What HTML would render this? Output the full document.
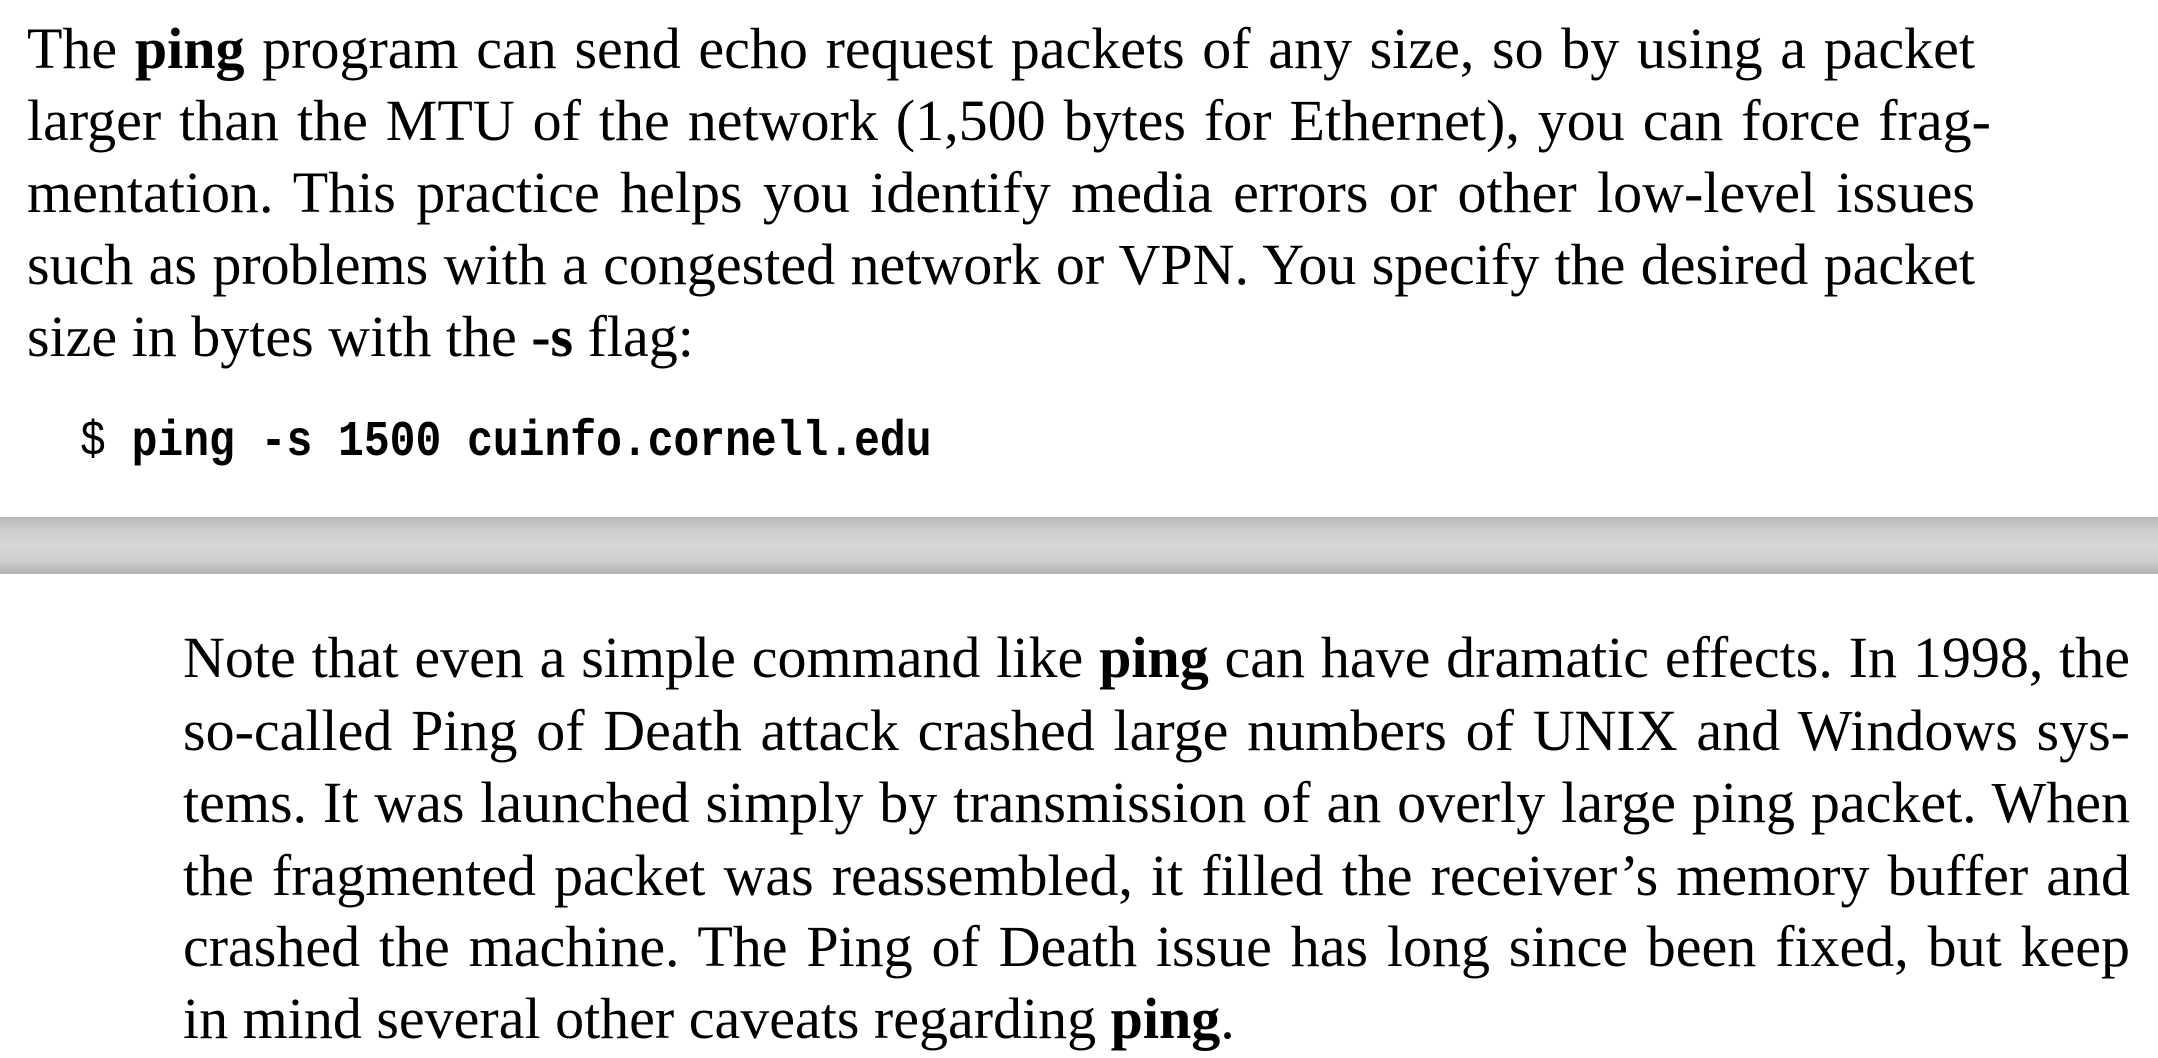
<!DOCTYPE html>
<html><head><meta charset="utf-8"><style>
html,body{margin:0;padding:0;background:#fff;width:2158px;height:1058px;overflow:hidden;position:relative}
.l{position:absolute;font-family:"Liberation Serif",serif;font-size:58px;line-height:72px;height:72px;color:#000;text-align:justify;text-align-last:justify;white-space:normal;}
.l.n{text-align-last:left;white-space:nowrap}
.code{position:absolute;left:80px;top:415px;font-family:"Liberation Mono",monospace;font-size:50px;line-height:56px;color:#000;white-space:pre;transform:scaleX(0.86);transform-origin:0 0}
.bar{position:absolute;left:0;top:517px;width:2158px;height:57px;background:linear-gradient(#b8b8b8 0%,#cfcfcf 25%,#d6d6d6 50%,#cfcfcf 75%,#b4b4b4 100%)}
</style></head><body>
<div class="l" style="left:27px;top:13px;width:1948px">The <b>ping</b> program can send echo request packets of any size, so by using a packet</div>
<div class="l" style="left:27px;top:85px;width:1964px">larger than the MTU of the network (1,500 bytes for Ethernet), you can force frag-</div>
<div class="l" style="left:27px;top:157px;width:1948px">mentation. This practice helps you identify media errors or other low-level issues</div>
<div class="l" style="left:27px;top:229px;width:1948px">such as problems with a congested network or VPN. You specify the desired packet</div>
<div class="l n" style="left:27px;top:301px;width:1948px">size in bytes with the <b>-s</b> flag:</div>
<div class="code">$ <b>ping -s 1500 cuinfo.cornell.edu</b></div>
<div class="bar"></div>
<div class="l" style="left:183px;top:622px;width:1947px">Note that even a simple command like <b>ping</b> can have dramatic effects. In 1998, the</div>
<div class="l" style="left:183px;top:695px;width:1947px">so-called Ping of Death attack crashed large numbers of UNIX and Windows sys-</div>
<div class="l" style="left:183px;top:767px;width:1947px">tems. It was launched simply by transmission of an overly large ping packet. When</div>
<div class="l" style="left:183px;top:840px;width:1947px">the fragmented packet was reassembled, it filled the receiver’s memory buffer and</div>
<div class="l" style="left:183px;top:911px;width:1947px">crashed the machine. The Ping of Death issue has long since been fixed, but keep</div>
<div class="l n" style="left:183px;top:983px;width:1947px">in mind several other caveats regarding <b>ping</b>.</div>
</body></html>
